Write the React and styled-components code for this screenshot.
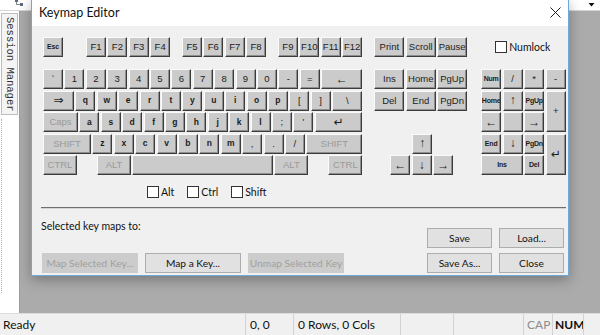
import styled, { createGlobalStyle } from "styled-components";

const GlobalStyle = createGlobalStyle`
	html, body {
		margin: 0;
		padding: 0;
		width: 600px;
		height: 335px;
		overflow: hidden;
		background: #fff;
	}
	* {
		box-sizing: border-box;
	}
`;

const UI_FONT = `Lato, "Liberation Sans", sans-serif`;
const KEY_FONT = `"Liberation Sans", Arial, "DejaVu Sans", sans-serif`;

const Screen = styled.div`
	position: relative;
	width: 600px;
	height: 335px;
	display: flex;
	flex-direction: column;
	font-family: ${UI_FONT};
	color: #111;
`;

const Toolbar = styled.div`
	height: 11px;
	flex: none;
	background: #fff;
	border-bottom: 1px solid #d6d6d6;
	display: flex;
	align-items: flex-start;
	justify-content: space-between;
	padding: 0 5px 0 15px;
`;

const Main = styled.div`
	flex: 1;
	display: flex;
	min-height: 0;
`;

const Sidebar = styled.div`
	width: 20px;
	flex: none;
	background: #fff;
	border-right: 1px solid #9c9c9c;
	padding: 2px 0 0 1px;
	display: flex;
	flex-direction: column;
	gap: 4px;
`;

const SessionTab = styled.div`
	width: 17px;
	height: 102px;
	border: 1px solid #bdbdbd;
	background: #f4f4f4;
	writing-mode: vertical-rl;
	font-family: "Liberation Mono", "DejaVu Sans Mono", monospace;
	font-size: 10.5px;
	color: #333;
	display: flex;
	align-items: center;
	justify-content: center;
	white-space: nowrap;
`;

const TreeLine = styled.div`
	flex: 1;
	width: 3px;
	border-left: 1px dotted #b0b0b0;
	margin-bottom: 20px;
`;

const Workspace = styled.div`
	flex: 1;
	background: #ababab;
`;

const Dialog = styled.div`
	position: absolute;
	left: 31px;
	top: -1px;
	width: 538px;
	height: 277px;
	background: #f0f0f0;
	border: 1px solid #6fa9d6;
	box-shadow: 0 4px 12px rgba(0, 0, 0, 0.3);
	display: flex;
	flex-direction: column;
`;

const TitleBar = styled.div`
	height: 26px;
	flex: none;
	background: #fff;
	display: flex;
	align-items: center;
	justify-content: space-between;
	padding: 0 7px 1px 7px;
	font-size: 12.5px;
	color: #111;
`;

const DialogBody = styled.div`
	flex: 1;
	display: flex;
	flex-direction: column;
	padding: 11px 2px 2px 11px;
`;

const KeyboardArea = styled.div`
	display: flex;
	align-items: flex-start;
`;

const Block = styled.div`
	width: ${(p) => p.$w}px;
	margin-left: ${(p) => p.$ml || 0}px;
	display: flex;
	flex-direction: column;
`;

const FRow = styled.div`
	height: 20px;
	display: flex;
	align-items: center;
	gap: 1.4px;
	padding-left: ${(p) => p.$pl || 0}px;
	margin-bottom: 12px;
`;

const Rows = styled.div`
	display: flex;
	flex-direction: column;
	gap: 1.5px;
`;

const Row = styled.div`
	height: 20px;
	display: flex;
	gap: 1.4px;
	padding-left: ${(p) => p.$pl || 0}px;
`;

const Key = styled.div`
	width: ${(p) => (p.$w ? p.$w + "px" : "20px")};
	flex: ${(p) => (p.$grow ? "1" : "none")};
	height: 20px;
	margin-left: ${(p) => p.$ml || 0}px;
	background: #cbcbcb;
	border-top: 1px solid #fbfbfb;
	border-left: 1px solid #fbfbfb;
	border-right: 1px solid #3c3c3c;
	border-bottom: 1px solid #3c3c3c;
	box-shadow: inset -1px -1px 0 #8e8e8e;
	display: flex;
	align-items: center;
	justify-content: center;
	padding-bottom: 1px;
	font-family: ${KEY_FONT};
	font-size: ${(p) => (p.$small ? 7 : p.$big ? 12 : p.$b ? 8.5 : 9.5)}px;
	font-weight: ${(p) => (p.$small || p.$b ? 700 : 400)};
	color: ${(p) => (p.$dim ? "#9a9a9a" : "#1c1c1c")};
	white-space: nowrap;
	overflow: hidden;
	letter-spacing: ${(p) => (p.$small ? "-0.2px" : "0")};
`;

const Numpad = styled.div`
	display: grid;
	grid-template-columns: repeat(4, 20px);
	grid-template-rows: repeat(5, 20px);
	gap: 1.5px;
`;

const PadKey = styled(Key)`
	width: auto;
	height: auto;
	grid-column: ${(p) => p.$col || "auto"};
	grid-row: ${(p) => p.$row || "auto"};
`;

const CheckRow = styled.div`
	display: flex;
	align-items: center;
	gap: 13px;
	padding-left: ${(p) => p.$pl || 0}px;
	margin-top: ${(p) => p.$mt || 0}px;
	height: 13px;
`;

const Check = styled.label`
	display: flex;
	align-items: center;
	gap: 2px;
	font-size: 10.5px;
	color: #111;
`;

const Box = styled.span`
	width: 12px;
	height: 12px;
	border: 1px solid #333;
	background: #fff;
`;

const Separator = styled.div`
	height: 2px;
	margin: 9px 0 0 -2px;
	background: #6e6e6e;
	border-bottom: 1px solid #d4d4d4;
`;

const BottomSection = styled.div`
	flex: 1;
	display: flex;
	justify-content: space-between;
	align-items: flex-end;
	padding-right: 2px;
`;

const LeftPane = styled.div`
	align-self: stretch;
	display: flex;
	flex-direction: column;
	justify-content: space-between;
	margin-left: -2px;
`;

const Label = styled.div`
	font-size: 10.5px;
	margin-top: 11px;
`;

const ButtonRow = styled.div`
	display: flex;
	gap: 7px;
	margin-left: 1px;
`;

const ButtonGrid = styled.div`
	display: grid;
	grid-template-columns: 65px 65px;
	gap: 5px 7px;
`;

const Button = styled.div`
	width: ${(p) => (p.$w ? p.$w + "px" : "auto")};
	height: 20px;
	display: flex;
	align-items: center;
	justify-content: center;
	font-size: 10.2px;
	white-space: nowrap;
	overflow: hidden;
	background: ${(p) => (p.$disabled ? "#cccccc" : "#e1e1e1")};
	border: 1px solid ${(p) => (p.$disabled ? "#cccccc" : "#adadad")};
	color: ${(p) => (p.$disabled ? "#a0a0a0" : "#111")};
`;

const StatusBar = styled.div`
	height: 22px;
	flex: none;
	background: #f0f0f0;
	border-top: 1px solid #dcdcdc;
	display: flex;
	align-items: center;
	font-size: 12px;
`;

const Pane = styled.div`
	width: ${(p) => (p.$w ? p.$w + "px" : "auto")};
	flex: ${(p) => (p.$w ? "none" : "1")};
	height: 100%;
	display: flex;
	align-items: center;
	padding-left: ${(p) => (p.$pl != null ? p.$pl : 4)}px;
	border-left: ${(p) => (p.$first ? "none" : "1px solid #d2d2d2")};
	color: ${(p) => (p.$dim ? "#8c8c8c" : "#111")};
	font-weight: ${(p) => (p.$bold ? 700 : 400)};
`;

const FKeys = [
	{ l: "Esc", small: true },
	{ l: "F1", ml: 21.6 },
	{ l: "F2" },
	{ l: "F3" },
	{ l: "F4" },
	{ l: "F5", ml: 10.4 },
	{ l: "F6" },
	{ l: "F7" },
	{ l: "F8" },
	{ l: "F9", ml: 10.4 },
	{ l: "F10" },
	{ l: "F11" },
	{ l: "F12" },
];

const chars = (s, extra = {}) => s.split("").map((l) => ({ l, ...extra }));

const MAIN_ROWS = [
	[...chars("`1234567890-="), { l: "←", grow: true, big: true }],
	[
		{ l: "⇒", w: 31, big: true },
		...chars("qwertyuiop", { b: true }),
		...chars("[]"),
		{ l: "\\", grow: true },
	],
	[
		{ l: "Caps", w: 35, dim: true },
		...chars("asdfghjkl", { b: true }),
		...chars(";'"),
		{ l: "↵", grow: true, big: true },
	],
	[
		{ l: "SHIFT", w: 48, dim: true },
		...chars("zxcvbnm", { b: true }),
		...chars(",./"),
		{ l: "SHIFT", grow: true, dim: true },
	],
	[
		{ l: "CTRL", w: 34, dim: true },
		{ l: "ALT", w: 34, dim: true, ml: 18.6 },
		{ l: "", grow: true },
		{ l: "ALT", w: 34, dim: true },
		{ l: "CTRL", w: 34, dim: true, ml: 18.6 },
	],
];

const PAD = [
	{ l: "Num", small: true },
	{ l: "/" },
	{ l: "*" },
	{ l: "-" },
	{ l: "Home", small: true },
	{ l: "↑", big: true },
	{ l: "PgUp", small: true },
	{ l: "+", col: "4", row: "2 / span 2" },
	{ l: "←", big: true },
	{ l: "" },
	{ l: "→", big: true },
	{ l: "End", small: true },
	{ l: "↓", big: true },
	{ l: "PgDn", small: true },
	{ l: "↵", col: "4", row: "4 / span 2", big: true },
	{ l: "Ins", small: true, col: "1 / span 2" },
	{ l: "Del", small: true },
];

function renderKey(k, i) {
	return (
		<Key
			key={i}
			$w={k.w}
			$grow={k.grow}
			$ml={k.ml}
			$dim={k.dim}
			$small={k.small}
			$big={k.big}
			$b={k.b}
		>
			{k.l}
		</Key>
	);
}

const CloseIcon = () => (
	<svg width="11" height="11" viewBox="0 0 11 11">
		<path d="M0.5 0.5 L10.5 10.5 M10.5 0.5 L0.5 10.5" stroke="#1a1a1a" strokeWidth="1" />
	</svg>
);

const TreeIcon = () => (
	<svg width="9" height="6" viewBox="0 0 9 6">
		<rect x="0" y="0" width="3" height="2" fill="#5a6b80" />
		<rect x="1" y="2" width="1" height="3" fill="#8a8a8a" />
		<rect x="1" y="4" width="4" height="1" fill="#8a8a8a" />
		<rect x="5" y="3" width="3" height="3" fill="#5a6b80" />
	</svg>
);

const DropArrow = () => (
	<svg width="7" height="8" viewBox="0 0 7 8">
		<path d="M0.5 3 L6.5 3 L3.5 6.5 Z" fill="#111" />
	</svg>
);

function App() {
	return (
		<Screen>
			<GlobalStyle />
			<Toolbar>
				<TreeIcon />
				<DropArrow />
			</Toolbar>
			<Main>
				<Sidebar>
					<SessionTab>Session Manager</SessionTab>
					<TreeLine />
				</Sidebar>
				<Workspace />
			</Main>
			<StatusBar>
				<Pane $first $pl={3}>Ready</Pane>
				<Pane $w={48}>0, 0</Pane>
				<Pane $w={107}>0 Rows, 0 Cols</Pane>
				<Pane $w={53} />
				<Pane $w={70} />
				<Pane $w={29} $dim $pl={3}>CAP</Pane>
				<Pane $w={31} $bold $pl={2}>NUM</Pane>
				<Pane $w={17} />
			</StatusBar>

			<Dialog>
				<TitleBar>
					<span>Keymap Editor</span>
					<CloseIcon />
				</TitleBar>
				<DialogBody>
					<KeyboardArea>
						<Block $w={320}>
							<FRow>{FKeys.map(renderKey)}</FRow>
							<Rows>
								{MAIN_ROWS.map((row, r) => (
									<Row key={r}>{row.map(renderKey)}</Row>
								))}
							</Rows>
							<CheckRow $pl={104} $mt={10}>
								<Check>
									<Box />
									Alt
								</Check>
								<Check>
									<Box />
									Ctrl
								</Check>
								<Check>
									<Box />
									Shift
								</Check>
							</CheckRow>
						</Block>

						<Block $w={93} $ml={12}>
							<FRow>
								{renderKey({ l: "Print", w: 30 }, 0)}
								{renderKey({ l: "Scroll", w: 30 }, 1)}
								{renderKey({ l: "Pause", w: 30 }, 2)}
							</FRow>
							<Rows>
								<Row>
									{renderKey({ l: "Ins", w: 30 }, 0)}
									{renderKey({ l: "Home", w: 30 }, 1)}
									{renderKey({ l: "PgUp", w: 30 }, 2)}
								</Row>
								<Row>
									{renderKey({ l: "Del", w: 30 }, 0)}
									{renderKey({ l: "End", w: 30 }, 1)}
									{renderKey({ l: "PgDn", w: 30 }, 2)}
								</Row>
								<Row />
								<Row $pl={38}>{renderKey({ l: "↑", big: true }, 0)}</Row>
								<Row $pl={16}>
									{renderKey({ l: "←", big: true }, 0)}
									{renderKey({ l: "↓", big: true }, 1)}
									{renderKey({ l: "→", big: true }, 2)}
								</Row>
							</Rows>
						</Block>

						<Block $w={85} $ml={14}>
							<FRow $pl={14}>
								<Check>
									<Box />
									Numlock
								</Check>
							</FRow>
							<Numpad>
								{PAD.map((k, i) => (
									<PadKey
										key={i}
										$col={k.col}
										$row={k.row}
										$small={k.small}
										$big={k.big}
									>
										{k.l}
									</PadKey>
								))}
							</Numpad>
						</Block>
					</KeyboardArea>

					<Separator />

					<BottomSection>
						<LeftPane>
							<Label>Selected key maps to:</Label>
							<ButtonRow>
								<Button $w={96} $disabled>
									Map Selected Key...
								</Button>
								<Button $w={96}>Map a Key...</Button>
								<Button $w={96} $disabled>
									Unmap Selected Key
								</Button>
							</ButtonRow>
						</LeftPane>
						<ButtonGrid>
							<Button>Save</Button>
							<Button>Load...</Button>
							<Button>Save As...</Button>
							<Button>Close</Button>
						</ButtonGrid>
					</BottomSection>
				</DialogBody>
			</Dialog>
		</Screen>
	);
}

export default App;
